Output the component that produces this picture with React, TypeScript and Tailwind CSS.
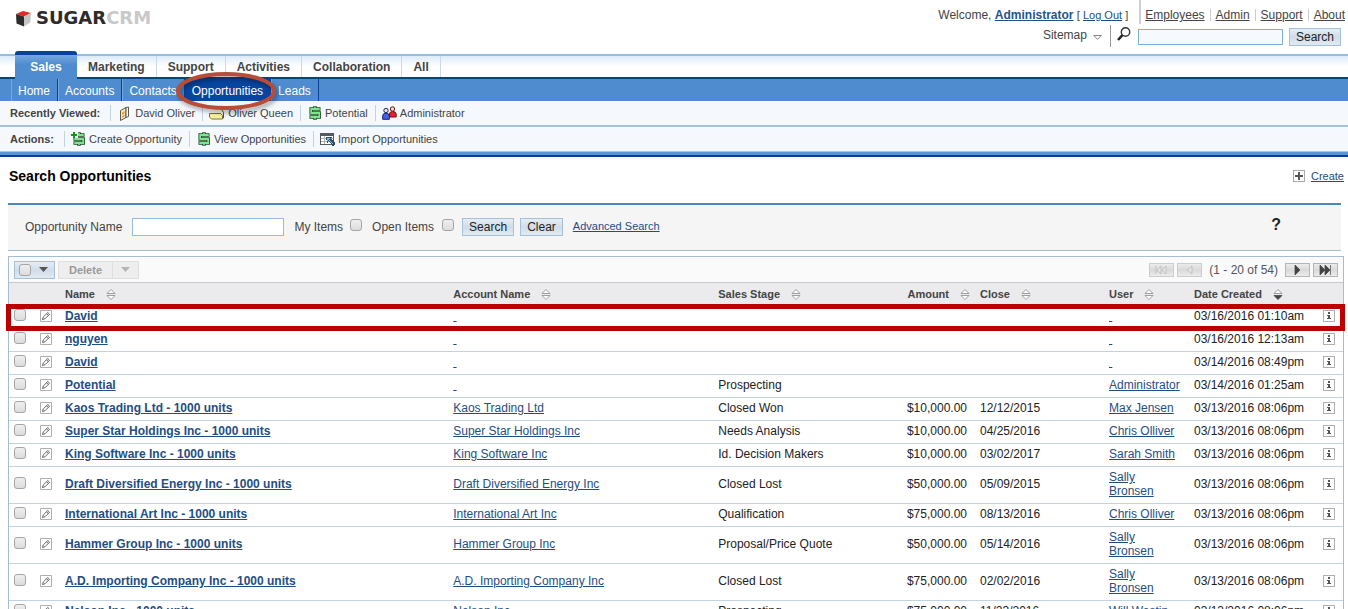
import React from "react";

type IconProps = { className?: string };

function DollarIcon({ plus = false }: { plus?: boolean }) {
  return (
    <svg width="15" height="14" viewBox="0 0 15 14" aria-hidden="true">
      <path d="M8 .2v3M8 10.800v3" stroke="#1d4a26" strokeWidth="3.600" />
      <path d="M13.500 3H4.200v4h8v4H2.500" fill="none" stroke="#1d4a26" strokeWidth="3.500" />
      <path d="M8 1v2M8 11v2" stroke="#7fe48c" strokeWidth="1.600" />
      <path d="M12.700 3H4.200v4h8v4H3.300" fill="none" stroke="#7fe48c" strokeWidth="1.800" />
      {plus && (
        <>
          <path d="M0 0h7v6h-7z" fill="#f5f9fd" />
          <path d="M2 0h2v2h2v2h-2v2h-2v-2h-2v-2h2z" fill="#0d9a12" />
        </>
      )}
    </svg>
  );
}

function ContactIcon() {
  return (
    <svg width="15" height="15" viewBox="0 0 15 15" aria-hidden="true">
      <path d="M3.500 4.500L9 1.500v10L3.500 14.500z" fill="#fbe9bd" stroke="#5f5a4c" />
      <path d="M9 1.500l2.500-.5v9.500L9 11.500z" fill="#fff" stroke="#5f5a4c" />
      <path d="M5 6.500l2.500-1.400v2.600L5 9z" fill="#f0a030" />
      <path d="M5 11l2.500-1.400" stroke="#8b7a45" />
    </svg>
  );
}

function AccountIcon() {
  return (
    <svg width="16" height="14" viewBox="0 0 16 14" aria-hidden="true">
      <path d="M3.500 1.500h8l3 5v5.500h-2" fill="#fbf9d8" stroke="#55522f" />
      <path d="M.5 7.500h11l2 2v3.500h-11l-2-2z" fill="#f7f19c" stroke="#77733f" />
    </svg>
  );
}

function UsersIcon() {
  return (
    <svg width="15" height="14" viewBox="0 0 15 14" aria-hidden="true">
      <circle cx="10.500" cy="3" r="2.200" fill="#f5d3c8" stroke="#5b2020" />
      <path d="M7.500 11v-3q0-2.500 3.200-2.500t3.500 2.500v3z" fill="#e0222c" stroke="#7a1010" />
      <circle cx="4" cy="4.500" r="2.200" fill="#f3dcd5" stroke="#23305b" />
      <path d="M.7 13.300v-3.300q0-2.800 3.300-2.800t3.400 2.800v3.300z" fill="#4560e8" stroke="#17207a" />
    </svg>
  );
}

function ImportIcon() {
  return (
    <svg width="15" height="13" viewBox="0 0 15 13" shapeRendering="crispEdges" aria-hidden="true">
      <path d="M0 0h14v12h-14z" fill="#55595e" />
      <path d="M1 3h12v8h-12z" fill="#fff" />
      <path d="M1 5h12v1h-12zM1 8h12v1h-12zM4 3h1v8h-1z" fill="#a9b0b8" />
      <path d="M6 4h6v1h-1v1h1v1h1v1h1v1h1v3h-1v1h-2v-2h-1v-1h-1v-1h-1v-1h-1v2h-1z" fill="#2d4f6e" />
      <path d="M7 5h3v1h-1v1h1v1h1v1h1v1h1v1h-1v-1h-1v-1h-1v-1h-1v-1h-1v1h-1z" fill="#8fb6d8" />
    </svg>
  );
}

function EditIcon() {
  return (
    <svg width="12" height="12" viewBox="0 0 12 12" className="block" aria-hidden="true">
      <path d="M.5.5h11v11h-11z" fill="#fff" stroke="#b0b0b0" />
      <path d="M2.500 9.500l.8-2.600 4.500-4.400 1.700 1.700-4.400 4.500z" fill="#fff" stroke="#555" strokeWidth=".9" />
      <path d="M6.500 3.700l1.800 1.800" stroke="#555" strokeWidth=".9" />
    </svg>
  );
}

function InfoIcon() {
  return (
    <svg width="12" height="12" viewBox="0 0 12 12" shapeRendering="crispEdges" className="block" aria-hidden="true">
      <path d="M.5.5h11v11h-11z" fill="#fff" stroke="#b0b0b0" />
      <path d="M5 2h2v2h-2zM4 5h3v3h1v1h-4v-1h1v-2h-1z" fill="#555" />
    </svg>
  );
}

function SortIcon({ active = false }: { active?: boolean }) {
  return (
    <svg width="10" height="11" viewBox="0 0 10 11" className="inline-block" aria-hidden="true">
      <path d="M1 4.500h8l-4-4z" fill="#fff" stroke="#888" strokeWidth=".8" />
      <path d="M1 6.500h8l-4 4z" fill={active ? "#444" : "#fff"} stroke={active ? "#444" : "#888"} strokeWidth=".8" />
    </svg>
  );
}

function Caret({ className = "" }: IconProps) {
  return (
    <svg width="9" height="5" viewBox="0 0 9 5" className={className} aria-hidden="true">
      <path d="M0 0h9l-4.500 5z" fill="currentColor" />
    </svg>
  );
}

const check =
  "block size-3 shrink-0 appearance-none rounded-[3px] border border-[#a5a5a5] bg-linear-to-b from-[#efefef] to-[#dcdcdc]";
const button =
  "h-[18px] border border-[#a5c0d8] bg-linear-to-b from-[#e6edf4] via-[#cfdde9] to-[#e2eaf1] px-1.5 text-xs leading-4 text-[#222]";
const link = "text-[#1f4e82] underline";

function TopLinks() {
  const items = ["Employees", "Admin", "Support", "About"];
  return (
    <nav className="flex h-6 items-center border-l-2 border-[#cfcfcf] pt-1.5 pl-1">
      {items.map((t, i) => (
        <React.Fragment key={t}>
          {i > 0 && <span className="mx-[5px] h-3 w-px bg-[#ccc]" />}
          <a href="#" className="underline">{t}</a>
        </React.Fragment>
      ))}
    </nav>
  );
}

function Header() {
  return (
    <header className="flex h-[54px] justify-between pr-[3px] pl-[15px] text-[#444]">
      <a href="#" className="flex h-9 items-center gap-1">
        <svg width="17" height="17" viewBox="0 0 17 17" aria-hidden="true">
          <path d="M1 4l7-3 8 2-7 3.500z" fill="#e02a26" />
          <path d="M1 4l8 2.500v10l-7.500-3z" fill="#2d2b2c" />
          <path d="M9 6.500l7-3.500-.8 9.500-6.200 4z" fill="#c4c4c4" />
        </svg>
        <span className="font-['DejaVu_Sans'] text-lg leading-5 font-bold text-[#2d2b2c]">
          SUGAR<span className="text-[#c9c9c9]">CRM</span>
        </span>
      </a>
      <div className="flex flex-col items-end">
        <div className="flex gap-[11px]">
          <div className="pt-[7px] leading-4">
            Welcome, <a href="#" className="font-bold text-[#1f5688] underline">Administrator</a>{" "}
            <span className="text-[11px]">[ <a href="#" className={link}>Log Out</a> ]</span>
          </div>
          <TopLinks />
        </div>
        <div className="flex items-start pr-1">
          <button className="mt-[3px] mr-2 flex h-4 items-center gap-1.5">
            Sitemap
            <svg width="9" height="5" viewBox="0 0 9 5" aria-hidden="true" className="mt-1">
              <path d="M.8.500h7.400l-3.700 3.800z" fill="#fff" stroke="#777" strokeWidth=".9" />
            </svg>
          </button>
          <span className="mt-px h-[22px] w-px bg-[#999]" />
          <svg width="14" height="14" viewBox="0 0 14 14" className="mt-[3px] mr-[7px] ml-1.5" aria-hidden="true">
            <circle cx="8.500" cy="5" r="4.200" fill="#fff" stroke="#333" strokeWidth="1.400" />
            <path d="M5.500 8l-4.500 5" stroke="#222" strokeWidth="2.600" />
          </svg>
          <input aria-label="Search all" className="mt-[5px] mr-1.5 h-4 w-[145px] border border-[#7fb0d6] bg-[#f6fafe] px-1" />
          <button className={`${button} mt-1`}>Search</button>
        </div>
      </div>
    </header>
  );
}

function Tabs() {
  const tabs = ["Marketing", "Support", "Activities", "Collaboration", "All"];
  return (
    <nav className="flex h-[25px] border-t-2 border-b-2 border-t-[#94bde4] border-b-[#0a3f8c] bg-linear-to-b from-[#dcebf8] to-white to-50% pl-[15px] font-bold text-[#444]">
      <a href="#" className="-mt-[5px] -mb-0.5 flex w-[62px] items-center justify-center rounded-t-[3px] border-t-4 border-[#0a429b] bg-linear-to-b from-[#74a8df] to-[#4e8ccf] to-40% text-white">
        Sales
      </a>
      {tabs.map((t) => (
        <a key={t} href="#" className="flex items-center border-r border-[#c9d9ea] px-[11px]">{t}</a>
      ))}
    </nav>
  );
}

function SubNav() {
  const items = ["Home", "Accounts", "Contacts", "Opportunities", "Leads"];
  return (
    <nav className="flex h-[22px] bg-[#4e8ccf] pl-[11px] text-white">
      {items.map((t) =>
        t === "Opportunities" ? (
          <a key={t} href="#" className="relative flex items-center border-r border-[#0a429b] bg-[#0845a0] px-[7px] pt-px">
            {t}
            <svg width="106" height="46" viewBox="0 0 106 46" className="pointer-events-none absolute -top-2 -left-[10px] z-10 max-w-none" aria-hidden="true">
              <ellipse cx="53" cy="23" rx="48" ry="17" fill="none" stroke="#000" strokeOpacity=".35" strokeWidth="4" className="blur-[2px]" />
              <ellipse cx="51" cy="20" rx="48" ry="17" fill="none" stroke="#b94c36" strokeWidth="4" />
            </svg>
          </a>
        ) : (
          <a key={t} href="#" className="flex items-center border-r border-l border-r-[#0a429b] border-l-[#75a6dc] pt-px pr-[7px] pl-1.5">{t}</a>
        ),
      )}
    </nav>
  );
}

type BarItem = { icon: React.ReactNode; text: string };

function Shortcuts({ label, items }: { label: string; items: BarItem[] }) {
  return (
    <div className="flex h-6 items-center bg-[#f5f9fd] pl-2.5 text-[11px] text-[#444]">
      <span className="mr-2.5 font-bold">{label}</span>
      {items.map((it) => (
        <a key={it.text} href="#" className="mr-[7px] flex h-4 items-center gap-[3px] border-l border-[#c3d3e2] pl-1.5">
          {it.icon}
          {it.text}
        </a>
      ))}
    </div>
  );
}

function SearchForm() {
  return (
    <form className="mr-[7px] ml-2 flex h-[48px] items-center border-t-2 border-b border-t-[#4f87ba] border-b-[#a5bdd3] bg-[#f5f5f5] pb-0.5 pl-[17px] text-[#444]" onSubmit={(e) => e.preventDefault()}>
      <label htmlFor="opp-name">Opportunity Name</label>
      <input id="opp-name" className="mr-2.5 ml-2.5 h-[18px] w-[152px] border border-[#94bde0] bg-white px-1" />
      <label htmlFor="mine">My Items</label>
      <input id="mine" type="checkbox" className={`${check} mr-2.5 mb-1 ml-[7px]`} />
      <label htmlFor="open">Open Items</label>
      <input id="open" type="checkbox" className={`${check} mr-2 mb-1 ml-2`} />
      <button className={`${button} mr-1.5`}>Search</button>
      <button type="button" className={`${button} mr-2.5`}>Clear</button>
      <a href="#" className={`${link} text-[11px]`}>Advanced Search</a>
      <button type="button" aria-label="Help" className="mr-[60px] mb-1 ml-auto text-base font-bold text-[#222]">?</button>
    </form>
  );
}

function PageButton({ label, d, off = false }: { label: string; d: string; off?: boolean }) {
  return (
    <button aria-label={label} disabled={off} className={`flex h-3.5 w-[25px] items-center justify-center border bg-linear-to-b from-[#ececec] via-[#d9d9d9] to-[#ececec] ${off ? "border-[#cdcdcd] text-[#b5b5b5]" : "border-[#b5b5b5] text-[#444]"}`}>
      <svg width="13" height="10" viewBox="0 0 13 10" aria-hidden="true">
        <path d={d} fill={off ? "#e4e4e4" : "currentColor"} stroke="currentColor" strokeWidth=".7" />
      </svg>
    </button>
  );
}

function Toolbar() {
  return (
    <div className="flex h-[25px] items-center bg-[#fafafa] px-[5px] text-[#555]">
      <div className="flex h-[18px] w-[41px] items-center justify-between border border-[#a5c0d8] bg-linear-to-b from-[#e6edf4] via-[#cfdde9] to-[#e2eaf1] pr-1.5 pl-1 text-[#555]">
        <input type="checkbox" aria-label="Select all" className={check} />
        <button aria-label="Selection options"><Caret /></button>
      </div>
      <div className="ml-[3px] flex h-[18px] items-stretch border border-[#dedede] bg-[#eee] text-[#999]">
        <button className="w-[54px] border-r border-[#dedede] text-[11px] leading-[14px] font-bold">Delete</button>
        <button aria-label="More actions" className="flex w-[25px] items-center justify-center text-[#b5b5b5]"><Caret /></button>
      </div>
      <div className="ml-auto flex items-center gap-[3px]">
        <PageButton off label="First page" d="M1 1v8M6 1v8l-4-4zM11 1v8l-4-4z" />
        <PageButton off label="Previous page" d="M9 1v8l-5-4z" />
        <span className="mx-1">(1 - 20 of 54)</span>
        <PageButton label="Next page" d="M4 0v10l5-5z" />
        <PageButton label="Last page" d="M1 0v10l5-5zM6 0v10l5-5zM11.500 0v10" />
      </div>
    </div>
  );
}

type Row = { name: string; account?: string; stage?: string; amount?: string; close?: string; user?: string; date: string };

const u = " - 1000 units";
const D = "03/13/2016 08:06pm";
const rows: Row[] = [
  { name: "David", date: "03/16/2016 01:10am" },
  { name: "nguyen", date: "03/16/2016 12:13am" },
  { name: "David", date: "03/14/2016 08:49pm" },
  { name: "Potential", stage: "Prospecting", user: "Administrator", date: "03/14/2016 01:25am" },
  { name: "Kaos Trading Ltd" + u, account: "Kaos Trading Ltd", stage: "Closed Won", amount: "$10,000.00", close: "12/12/2015", user: "Max Jensen", date: D },
  { name: "Super Star Holdings Inc" + u, account: "Super Star Holdings Inc", stage: "Needs Analysis", amount: "$10,000.00", close: "04/25/2016", user: "Chris Olliver", date: D },
  { name: "King Software Inc" + u, account: "King Software Inc", stage: "Id. Decision Makers", amount: "$10,000.00", close: "03/02/2017", user: "Sarah Smith", date: D },
  { name: "Draft Diversified Energy Inc" + u, account: "Draft Diversified Energy Inc", stage: "Closed Lost", amount: "$50,000.00", close: "05/09/2015", user: "Sally Bronsen", date: D },
  { name: "International Art Inc" + u, account: "International Art Inc", stage: "Qualification", amount: "$75,000.00", close: "08/13/2016", user: "Chris Olliver", date: D },
  { name: "Hammer Group Inc" + u, account: "Hammer Group Inc", stage: "Proposal/Price Quote", amount: "$50,000.00", close: "05/14/2016", user: "Sally Bronsen", date: D },
  { name: "A.D. Importing Company Inc" + u, account: "A.D. Importing Company Inc", stage: "Closed Lost", amount: "$75,000.00", close: "02/02/2016", user: "Sally Bronsen", date: D },
  { name: "Nelson Inc" + u, account: "Nelson Inc", stage: "Prospecting", amount: "$75,000.00", close: "11/23/2016", user: "Will Westin", date: D },
];

function Th({ children, right = false, active = false }: { children: string; right?: boolean; active?: boolean }) {
  return (
    <th className={right ? "pr-2.5" : ""}>
      <button className={`flex w-full items-center gap-[11px] font-bold whitespace-nowrap ${right ? "justify-end" : ""}`}>
        {children}
        <SortIcon active={active} />
      </button>
    </th>
  );
}

function Results() {
  return (
    <section className="mt-[5px] mr-1 ml-2 border border-[#a5bdd3]">
      <Toolbar />
      <table className="w-full table-fixed border-separate border-spacing-0 text-left leading-[14px]">
        <colgroup>
          <col className="w-[31px]" />
          <col className="w-[25px]" />
          <col />
          <col className="w-[265px]" />
          <col className="w-[14%]" />
          <col className="w-[75px]" />
          <col className="w-[129px]" />
          <col className="w-[85px]" />
          <col className="w-[129px]" />
          <col className="w-5" />
        </colgroup>
        <thead>
          <tr className="h-6 bg-[#ebebed] text-[11px] text-[#444] [&>th]:border-t [&>th]:border-[#c3c9cf] [&>th]:pb-px">
            <th />
            <th />
            <Th>Name</Th>
            <Th>Account Name</Th>
            <Th>Sales Stage</Th>
            <Th right>Amount</Th>
            <Th>Close</Th>
            <Th>User</Th>
            <Th active>Date Created</Th>
            <th />
          </tr>
        </thead>
        <tbody>
          {rows.map((r, i) => (
            <tr key={i} className="[&>td]:border-b [&>td]:border-[#c0d3e4] [&>td]:pt-[3px] [&>td]:pb-[5px]">
              <td className="relative pl-[5px]">
                <input type="checkbox" aria-label={`Select ${r.name}`} className={`${check} mb-0.5`} />
                {i === 0 && (
                  <span className="pointer-events-none absolute -top-[2px] -left-[3px] z-10 h-[27px] w-[calc(100vw-9px)] border-5 border-[#bb0000]" />
                )}
              </td>
              <td><a href="#" aria-label={`Edit ${r.name}`} className="block"><EditIcon /></a></td>
              <td><a href="#" className={`${link} font-bold`}>{r.name}</a></td>
              <td>{r.account ? <a href="#" className={link}>{r.account}</a> : <a href="#" className={`${link} whitespace-pre`}> </a>}</td>
              <td className="text-[#222]">{r.stage}</td>
              <td className="text-right text-[#222]"><div className="-ml-2 pr-[13px]">{r.amount}</div></td>
              <td className="text-[#222]">{r.close}</td>
              <td className="pr-3">{r.user ? <a href="#" className={link}>{r.user}</a> : <a href="#" className={`${link} whitespace-pre`}> </a>}</td>
              <td className="whitespace-nowrap text-[#222]">{r.date}</td>
              <td><button aria-label={`Details of ${r.name}`} className="block"><InfoIcon /></button></td>
            </tr>
          ))}
        </tbody>
      </table>
    </section>
  );
}

export default function App() {
  return (
    <div className="min-h-screen min-w-[1100px] overflow-hidden bg-white font-['Liberation_Sans',Arial,sans-serif] text-xs">
      <Header />
      <Tabs />
      <SubNav />
      <Shortcuts
        label="Recently Viewed:"
        items={[
          { icon: <ContactIcon />, text: "David Oliver" },
          { icon: <AccountIcon />, text: "Oliver Queen" },
          { icon: <DollarIcon />, text: "Potential" },
          { icon: <UsersIcon />, text: "Administrator" },
        ]}
      />
      <div className="h-0.5 bg-[#a3c2dd]" />
      <Shortcuts
        label="Actions:"
        items={[
          { icon: <DollarIcon plus />, text: "Create Opportunity" },
          { icon: <DollarIcon />, text: "View Opportunities" },
          { icon: <ImportIcon />, text: "Import Opportunities" },
        ]}
      />
      <div className="h-[6px] border-t border-b-2 border-t-[#a9c4de] border-b-[#0a3f8c] bg-[#5a94d4]" />
      <main>
        <div className="flex h-[46px] items-start justify-between pt-[11px] pr-1 pl-[9px]">
          <h1 className="text-sm leading-4 font-bold text-black">Search Opportunities</h1>
          <a href="#" className="flex items-center gap-1.5 text-[11px] leading-4 text-[#1f4e82]">
            <svg width="12" height="12" viewBox="0 0 12 12" shapeRendering="crispEdges" aria-hidden="true">
              <path d="M.5.5h11v11h-11z" fill="#fff" stroke="#a9a9a9" />
              <path d="M5 2h2v3h3v2h-3v3h-2v-3h-3v-2h3z" fill="#555" />
            </svg>
            <span className="underline">Create</span>
          </a>
        </div>
        <SearchForm />
        <Results />
      </main>
    </div>
  );
}
